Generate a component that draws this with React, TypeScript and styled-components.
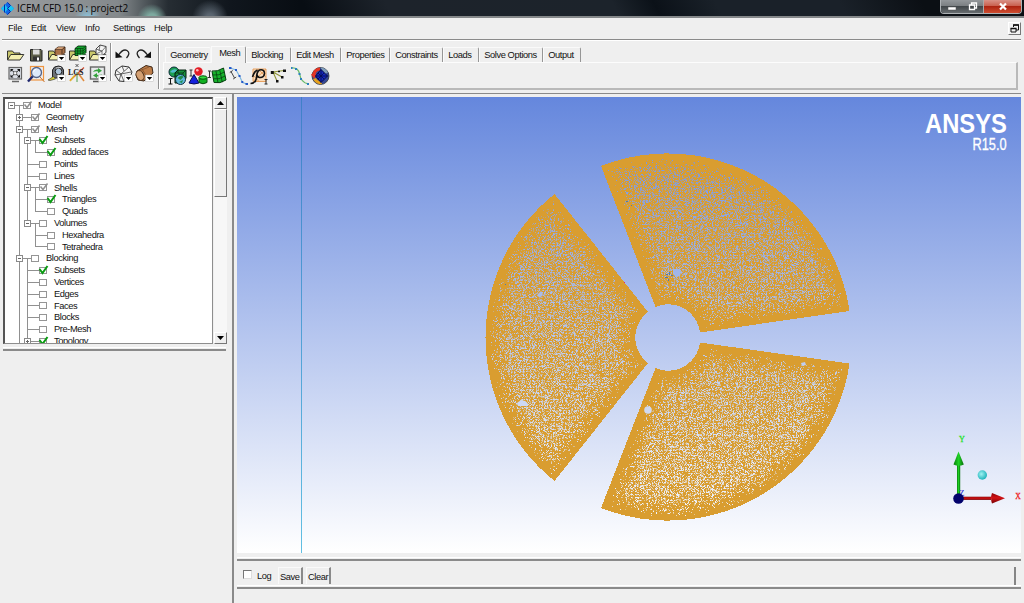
import React from 'react';
import styled, { createGlobalStyle } from 'styled-components';

const Global = createGlobalStyle`
  html, body { margin: 0; padding: 0; background: #efefef; overflow: hidden; }
  * { box-sizing: border-box; }
  svg { display: block; }
`;

const Window = styled.div`
  width: 1024px;
  height: 603px;
  display: flex;
  flex-direction: column;
  background: #efefef;
  font-family: 'Liberation Sans', Arial, sans-serif;
  font-size: 9.3px;
  letter-spacing: -0.4px;
  color: #111;
  white-space: nowrap;
`;

/* ---------- title bar ---------- */

const TitleBar = styled.header`
  height: 18px;
  flex: none;
  display: flex;
  align-items: flex-start;
  padding-left: 1px;
  border-bottom: 2px solid #85888a;
  background:
    radial-gradient(circle at 152px 19px, #7da99f 0 5px, transparent 15px),
    radial-gradient(circle at 88px 20px, #8cc3dc 0 3px, transparent 14px),
    radial-gradient(circle at 210px 18px, #59646f 0 4px, transparent 18px),
    linear-gradient(90deg, #9a9da0 0, #8d9194 70px, #84898c 118px, #5a6165 140px, #262d33 168px, #10161d 230px, transparent 300px),
    linear-gradient(62deg, #080d13 0 30%, #1d232b 38%, #1c232b 60%, #0b1118 64%, #1a2129 70% 82%, #0b0f14 90%);
`;

const TitleText = styled.span`
  flex: 1;
  padding-left: 3px;
  font: 10px/16px 'Open Sans', 'Noto Sans', sans-serif;
  letter-spacing: -0.1px;
  color: #060606;
`;

const Caption = styled.div`
  display: flex;
  height: 14px;
  margin-right: 2px;
  border: 1px solid #aeb2b5;
  border-top: 0;
  border-radius: 0 0 4px 4px;
  overflow: hidden;
`;

const CaptionButton = styled.div<{ $w: number; $close?: boolean }>`
  width: ${(p) => p.$w}px;
  display: flex;
  justify-content: center;
  background: ${(p) =>
    p.$close
      ? 'linear-gradient(#d99186, #c9604f 45%, #ad2411 50%, #cf4d30)'
      : 'linear-gradient(#93979a, #7b7f82 45%, #42474a 50%, #686d70)'};
  border-left: ${(p) => (p.$w === 21 ? '0' : '1px solid #a9a9aa')};
`;

/* ---------- menu bar ---------- */

const MenuBar = styled.nav`
  height: 22px;
  flex: none;
  display: flex;
  align-items: center;
  border-bottom: 1px solid #8a8a8a;
  margin: 0 3px 0 2px;
  padding: 0 0 1px 6px;
`;

const MenuItem = styled.span<{ $w: number }>`
  width: ${(p) => p.$w}px;
  letter-spacing: -0.2px;
`;

const RestoreBox = styled.div`
  margin-left: auto;
  width: 13px;
  height: 13px;
  background: #f2f2f2;
  border: 1px solid;
  border-color: #fff #777 #777 #fff;
`;

/* ---------- tool bar ---------- */

const ToolBar = styled.section`
  height: 54px;
  flex: none;
  display: flex;
  margin: 0 3px 0 2px;
  border-bottom: 1px solid #8a8a8a;
  border-top: 1px solid #fff;
`;

const IconGrid = styled.div<{ $cols: number; $gap: number; $top?: number }>`
  display: grid;
  grid-template-columns: repeat(${(p) => p.$cols}, 20.6px);
  grid-auto-rows: 20px;
  padding: ${(p) => p.$top ?? 3}px 0 0 ${(p) => p.$gap}px;
`;

const Divider = styled.div<{ $h: number; $l: number }>`
  width: 2px;
  height: ${(p) => p.$h}px;
  margin: 2px 0 0 ${(p) => p.$l}px;
  border-left: 1px solid #909090;
  border-right: 1px solid #fff;
`;

const TabArea = styled.div`
  flex: 1;
  margin: 5px 3px 0 3px;
`;

const TabStrip = styled.div`
  display: flex;
  height: 16px;
  align-items: flex-end;
  padding-left: 2px;
`;

const Tab = styled.div<{ $w: number; $active?: boolean }>`
  width: ${(p) => p.$w}px;
  height: ${(p) => (p.$active ? 17 : 15)}px;
  margin-bottom: ${(p) => (p.$active ? '-1px' : '0')};
  padding: ${(p) => (p.$active ? '0 0 4px 7px' : '0 0 1px 4px')};
  display: flex;
  align-items: center;
  background: #efefef;
  border-top: 1px solid #fafafa;
  border-left: 1px solid #fafafa;
  border-right: 1px solid ${(p) => (p.$w === 46 ? '#f6f6f6' : '#969696')};
  border-top-right-radius: 2px;
`;

const TabPanel = styled.div`
  height: 28px;
  display: flex;
  align-items: center;
  padding-left: 3px;
  border: 1px solid;
  border-color: #fcfcfc #b9b9b9 #b9b9b9 #fcfcfc;
  border-right-width: 2px;
  border-bottom-width: 2px;
`;

/* ---------- body ---------- */

const Body = styled.main`
  flex: 1;
  display: flex;
  min-height: 0;
`;

const Side = styled.aside`
  width: 234px;
  flex: none;
  border-right: 2px solid #8a8a8a;
  padding: 3px 0 0 3px;
`;

const TreeRow = styled.div`
  display: flex;
  height: 250px;
`;

const TreeBox = styled.div`
  width: 210px;
  height: 247px;
  padding-top: 1px;
  overflow: hidden;
  background: #fff;
  border: 1px solid #8e8e8e;
  border-left: 2px solid #555;
  border-top: 2px solid #4c4c4c;
`;

const Node = styled.div`
  display: flex;
  align-items: center;
  height: 11.8px;
  line-height: 11.8px;
`;

const ScrollBar = styled.div`
  width: 13px;
  height: 247px;
  display: flex;
  flex-direction: column;
  margin-left: 1px;
  background: #f7f7f7;
`;

const ScrollPart = styled.div<{ $h: number }>`
  height: ${(p) => p.$h}px;
  display: flex;
  align-items: center;
  justify-content: center;
  background: #efefef;
  border: 1px solid;
  border-color: #fff #777 #777 #fff;
`;

const Spacer = styled.div`
  flex: 1;
`;

const Rule = styled.div<{ $w: string }>`
  width: ${(p) => p.$w};
  height: 4px;
  border-bottom: 2px solid #8a8a8a;
  border-top: 1px solid #fff;
`;

const Work = styled.section`
  flex: 1;
  padding: 3px 3px 0 3px;
  display: flex;
  flex-direction: column;
`;

const Viewport = styled.div`
  height: 456px;
  flex: none;
  margin-bottom: 4px;
`;

const LogBar = styled.div`
  height: 24px;
  display: flex;
  align-items: center;
  padding: 5px 5px 0 6px;
`;

const CheckBox = styled.div`
  width: 9px;
  height: 9px;
  margin-bottom: 2px;
  background: #fff;
  border: 1px solid;
  border-color: #777 #ddd #ddd #777;
`;

const LogLabel = styled.span`
  margin: 1px 0 0 5px;
  width: 21px;
`;

const LogButton = styled.div<{ $w: number }>`
  width: ${(p) => p.$w}px;
  height: 17px;
  line-height: 19px;
  padding-left: 1px;
  margin-right: 3px;
  border-left: 1px solid #fafafa;
  border-top: 1px solid #fafafa;
  border-right: 2px solid #8a8a8a;
`;

const LogEnd = styled.div`
  margin-left: auto;
  width: 2px;
  height: 18px;
  background: #858585;
`;

/* ---------- tool icons ---------- */

const Svg = ({ children }: { children: React.ReactNode }) => (
  <svg width="20" height="20" viewBox="0 0 20 20">
    {children}
  </svg>
);

const Drop = () => (
  <g>
    <rect x="11.500" y="11" width="8" height="6.500" fill="#fff" stroke="#bbb" strokeWidth=".5" />
    <path d="M12.800 13h5.400l-2.700 3z" fill="#000" />
  </g>
);

const Folder = () => (
  <g stroke="#222" strokeWidth=".9">
    <path d="M2.500 15.500V7h5l1.500 2h6v6.500z" fill="#c9c76b" />
    <path d="M2.500 16l3.300-5.500h13l-3.800 5.500z" fill="#f3efb0" />
  </g>
);

const OpenIcon = () => (
  <Svg>
    <Folder />
  </Svg>
);

const SaveIcon = () => (
  <Svg>
    <path d="M4.500 5.500h10.500l1 1V17h-11.500z" fill="#5f604a" stroke="#222" />
    <rect x="7" y="5.500" width="6.500" height="5" fill="#dcdcdc" />
    <rect x="7" y="12.500" width="7" height="4.500" fill="#333" />
    <rect x="11" y="13.500" width="2" height="3" fill="#fff" />
  </Svg>
);

const OpenGeometryIcon = () => (
  <Svg>
    <Folder />
    <path d="M9 5.500l3-2.500h7v5.500l-3 3H9z" fill="#a87148" stroke="#3c2616" strokeWidth=".9" />
    <path d="M9 5.500h7v6M16 5.500l3-2.500" fill="none" stroke="#3c2616" strokeWidth=".8" />
    <path d="M9.500 5.300l2.700-2H18l-2.300 2z" fill="#d2a078" />
    <Drop />
  </Svg>
);

const OpenMeshIcon = () => (
  <Svg>
    <Folder />
    <path d="M8 4.500l3-2.500h8v6.500l-3 3H8z" fill="#12a52c" stroke="#08310e" strokeWidth=".9" />
    <path d="M8 4.500h8v7M16 4.500l3-2.500M10.700 4.500v7M13.400 4.500v7M8 7h8l3-3M8 9.300h8l3-3" fill="none" stroke="#062a0b" strokeWidth=".6" />
    <Drop />
  </Svg>
);

const OpenBlockIcon = () => (
  <Svg>
    <Folder />
    <path d="M9 5l4-4 6 1.500v6l-4 3-6-1z" fill="#f4f4f4" stroke="#333" strokeWidth=".9" />
    <path d="M9 5l6 2 4-4.500M15 7v4.500M13 1l-1 6 M9 10l6-3" fill="none" stroke="#444" strokeWidth=".7" />
    <Drop />
  </Svg>
);

const FitIcon = () => (
  <Svg>
    <rect x="4" y="3.500" width="12.500" height="11.500" fill="#d9dde4" stroke="#666" strokeWidth="1.200" />
    <path d="M6 5.500l8.500 7.500M14.500 5.500l-8.500 7.500" stroke="#222" strokeWidth=".9" />
    <path d="M5.500 5h3l-3 3zM15 5v3l-3-3zM5.500 13.500v-3l3 3zM15 13.500h-3l3-3z" fill="#111" />
    <rect x="8.800" y="7.800" width="3" height="3" fill="#fff" stroke="#333" strokeWidth=".6" />
    <path d="M7 17.500h7" stroke="#666" strokeWidth="1.500" />
  </Svg>
);

const ZoomIcon = () => (
  <Svg>
    <rect x="4.500" y="2.500" width="13" height="13.500" fill="none" stroke="#ef9541" strokeWidth="1.200" />
    <path d="M7 12l-5 5.500" stroke="#20286e" strokeWidth="2.400" />
    <circle cx="10.500" cy="8.500" r="5" fill="#dde9fa" stroke="#56658a" strokeWidth="1.300" />
    <path d="M7.500 8q.5-2.500 3-3" stroke="#fff" fill="none" />
    <path d="M14 13l4.500 5" stroke="#cb752b" />
  </Svg>
);

const MeasureIcon = () => (
  <Svg>
    <path d="M6.500 13V6q1-4 6-4 4 0 5 4v8h-8z" fill="#6a6f76" stroke="#222" />
    <circle cx="12.500" cy="7.500" r="3.300" fill="#adc4da" stroke="#222" />
    <path d="M10 4l5-.5" stroke="#ddd" />
    <path d="M2 16l5.500-3.500 2 2.500-5.500 1.500z" fill="#d7d22f" stroke="#444" strokeWidth=".7" />
    <Drop />
  </Svg>
);

const LcsIcon = () => (
  <Svg>
    <path d="M3 16.500L17 3.500" stroke="#d04a2d" strokeWidth="1.200" />
    <path d="M8 11l-5 6" stroke="#e3b52b" strokeWidth="1.500" />
    <path d="M10 8v10" stroke="#4fa04f" />
    <path d="M11 9l6 8" stroke="#e08a3c" strokeWidth="1.500" />
    <path d="M8.500 0l3 3M11.500 0l-3 3" stroke="#333" strokeWidth=".8" />
    <text x="1" y="10.500" fontFamily="Liberation Serif, serif" fontSize="8" fontWeight="700" letterSpacing="0" fill="#222">
      LCS
    </text>
  </Svg>
);

const RefreshIcon = () => (
  <Svg>
    <rect x="3.500" y="3" width="14" height="12" fill="#e6e9ea" stroke="#666" strokeWidth="1.400" />
    <path d="M6 8q1-3 5-2.500V4l4 2.800-4 2.400V7.500Q8.500 7 6 8zM15 10q-1 3-5 2.500V14l-4-2.500L10 9v1.700Q13 11.500 15 10z" fill="#35a23c" />
    <path d="M6 17.500h6" stroke="#555" strokeWidth="1.500" />
    <Drop />
  </Svg>
);

const UndoIcon = () => (
  <Svg>
    <path d="M5.500 11Q10 4.500 14 6.500q4 2.500-.5 7.500" fill="none" stroke="#222" strokeWidth="1.300" />
    <path d="M2.500 7.500v6.500l7-.7z" fill="#111" />
  </Svg>
);

const RedoIcon = () => (
  <Svg>
    <path d="M13.500 11Q9 4.500 5 6.500q-4 2.500.5 7.500" fill="none" stroke="#222" strokeWidth="1.300" />
    <path d="M17 7.500v6.500l-7-.7z" fill="#111" />
  </Svg>
);

const WireIcon = () => (
  <Svg>
    <path d="M2 11l1-5 6-4 7 1 3 5-2 6-6 3.500-5-.5z" fill="#f4f4f4" stroke="#333" />
    <path d="M3 6l5 4 8-7M8 10l3 7.500M2 11l6-1 10-2M9 2l2 5M8 10l-2 7" fill="none" stroke="#444" strokeWidth=".8" />
    <Drop />
  </Svg>
);

const SolidIcon = () => (
  <Svg>
    <path d="M2 11l1-4 9-5.500 6 1.500 1 6-9 8-6-1z" fill="#bd7d49" stroke="#3c2616" />
    <ellipse cx="6" cy="11.500" rx="3.700" ry="5.200" transform="rotate(-25 6 11.500)" fill="#d5a173" stroke="#4b301c" strokeWidth=".9" />
    <path d="M8 5l5 8M5 7l10-4" stroke="#7d4d2a" strokeWidth=".7" />
    <Drop />
  </Svg>
);

const GlobalMeshIcon = () => (
  <Svg>
    <circle cx="7" cy="6" r="5" fill="#1ca053" stroke="#0c2c38" />
    <path d="M3 6q3-4 7-2-2 4-7 2z" fill="#52b9cd" />
    <path d="M8 7l3-3h8v8l-3 5H8z" fill="#17913c" stroke="#051f0e" />
    <path d="M8 7h8v10M16 7l3-3M11 7V4M8 10h8M12 7v6" fill="none" stroke="#051f0e" strokeWidth=".7" />
    <circle cx="13.500" cy="13.500" r="5" fill="#5fbadb" stroke="#102e41" />
    <path d="M10.500 12q4-4 6-1l-3 3zM12 16l4-2-1 3z" fill="#238b48" />
    <path d="M1.500 12.500h4M3.500 12.500v5.500M1.500 18h4" stroke="#111" fill="none" />
  </Svg>
);

const PartMeshIcon = () => (
  <Svg>
    <path d="M1.500 4h3M3 4v6M1.500 10h3" stroke="#333" fill="none" />
    <path d="M6 8.500l5 8.500q-5 2-10 0z" fill="#1420dd" stroke="#060a54" />
    <circle cx="10.500" cy="5.500" r="4.200" fill="#e21b25" />
    <circle cx="9.300" cy="4.200" r="1.300" fill="#ffb5b5" />
    <path d="M11 11.500v5q4 2.500 8 0v-5z" fill="#0fb021" stroke="#064a0d" />
    <ellipse cx="15" cy="11.500" rx="4" ry="1.700" fill="#2fe03c" stroke="#064a0d" />
  </Svg>
);

const SurfaceMeshIcon = () => (
  <Svg>
    <path d="M4 5Q9 6 15.500 2L18 14Q12 18 6 16.500z" fill="#17b22b" stroke="#073f10" />
    <path d="M8 5.300l2 11.600M11.800 4.300l2.500 12M4.700 9Q11 10 16.300 6M5.300 12.800Q11 14 17.200 10" fill="none" stroke="#073f10" strokeWidth=".8" />
    <path d="M0 5h3M1.500 5v6.500M0 11.500h3" stroke="#333" fill="none" />
  </Svg>
);

const CurveMeshIcon = () => (
  <Svg>
    <path d="M1 2l6 2L10.500 10l3 6.500L18 18" fill="none" stroke="#7ab4dd" strokeWidth="1.100" />
    <path d="M2 5.500L5.500 12M.8 6.500l3-2M4.200 13l3-2" stroke="#444" fill="none" />
    <path d="M0 1h2.500v2H0zM6 3h2v2H6zM9.500 9h2v2h-2zM12.300 15h2v2h-2zM16.500 17H19v2h-2.500z" fill="#2459ca" />
  </Svg>
);

const DensityIcon = () => (
  <Svg>
    <path d="M3 3h13v12.500H3zM3 15.500L16 3M3 9l6 6.500M8 3l8 8" fill="#f9dcbd" stroke="#e8a160" />
    <path d="M0.500 17.500q5 0 6-5.500 0-6 3-8 5-1 5 3.500-.5 4.500-5 4-3-.5-2.500-4M2.500 11q2-6 5-7" fill="none" stroke="#111" strokeWidth="1.600" />
    <path d="M14.500 13.500h3M16 13.500V18M14.500 18h3" stroke="#222" fill="none" />
  </Svg>
);

const NodesIcon = () => (
  <Svg>
    <path d="M3 6L14 4.500M3 6l9 5M3 6l4 9" stroke="#8f9436" strokeWidth="1.100" fill="none" />
    <path d="M.8 5h3v3h-3zM13 3.500h3v2.500h-3zM8 4.700h2v1.600H8zM11 10h2.500v2.500H11zM6 14h2.500v2.500H6z" fill="#111" />
  </Svg>
);

const SplineIcon = () => (
  <Svg>
    <path d="M0 2q7-1 8.500 5.500Q10 17 17.500 18" fill="none" stroke="#69bb6c" strokeWidth="1.300" />
    <path d="M-.5 1h2v2h-2zM4 2h2v2H4zM7.500 7h2v2h-2zM9 12h2v2H9zM16 17h2v2h-2z" fill="#2b7fc0" />
  </Svg>
);

const ComputeIcon = () => (
  <Svg>
    <circle cx="9.500" cy="10" r="8.500" fill="#344896" stroke="#333" strokeWidth=".8" />
    <path d="M1.500 7.500Q3 2 9 1.500v3Q5 5 4.500 8.500h2l-3.500 4-3-4z" fill="#e53524" />
    <path d="M2 13q3 6 9 5l-1-3q-4 0-5-3z" fill="#e8a31c" />
    <path d="M10 1.500q5 .5 7 5l-3 1.500q-1-3-4-3z" fill="#7f9db8" />
    <path d="M10 3.500l6.500 6.500-6.500 6.500L4.500 10z" fill="#1527bd" stroke="#060b4d" />
    <path d="M10 3.500v13M4.500 10h12M7 7l6 6M13 7l-6 6" stroke="#060b4d" strokeWidth=".8" />
  </Svg>
);

const fileIcons = [OpenIcon, SaveIcon, OpenGeometryIcon, OpenMeshIcon, OpenBlockIcon, FitIcon, ZoomIcon, MeasureIcon, LcsIcon, RefreshIcon];
const editIcons = [UndoIcon, RedoIcon, WireIcon, SolidIcon];
const meshIcons = [GlobalMeshIcon, PartMeshIcon, SurfaceMeshIcon, CurveMeshIcon, DensityIcon, NodesIcon, SplineIcon, ComputeIcon];

/* ---------- model tree ---------- */

type Mark = 'off' | 'on' | 'partial';
interface Item {
  text: string;
  level: number;
  mark: Mark;
  box?: '+' | '-';
}

const items: Item[] = [
  { text: 'Model', level: 0, mark: 'partial', box: '-' },
  { text: 'Geometry', level: 1, mark: 'partial', box: '+' },
  { text: 'Mesh', level: 1, mark: 'partial', box: '-' },
  { text: 'Subsets', level: 2, mark: 'on', box: '-' },
  { text: 'added faces', level: 3, mark: 'on' },
  { text: 'Points', level: 2, mark: 'off' },
  { text: 'Lines', level: 2, mark: 'off' },
  { text: 'Shells', level: 2, mark: 'partial', box: '-' },
  { text: 'Triangles', level: 3, mark: 'on' },
  { text: 'Quads', level: 3, mark: 'off' },
  { text: 'Volumes', level: 2, mark: 'off', box: '-' },
  { text: 'Hexahedra', level: 3, mark: 'off' },
  { text: 'Tetrahedra', level: 3, mark: 'off' },
  { text: 'Blocking', level: 1, mark: 'off', box: '-' },
  { text: 'Subsets', level: 2, mark: 'on' },
  { text: 'Vertices', level: 2, mark: 'off' },
  { text: 'Edges', level: 2, mark: 'off' },
  { text: 'Faces', level: 2, mark: 'off' },
  { text: 'Blocks', level: 2, mark: 'off' },
  { text: 'Pre-Mesh', level: 2, mark: 'off' },
  { text: 'Topology', level: 2, mark: 'on', box: '+' },
];

const continues = (index: number, depth: number) => {
  for (let j = index + 1; j < items.length; j++) {
    if (items[j].level < depth) return false;
    if (items[j].level === depth) return true;
  }
  return depth === 1;
};

const Gutter = ({ index }: { index: number }) => {
  const { level, mark, box } = items[index];
  const x = 6.5 + 8 * level;
  const c = x + 15;
  let d = `M${x} 5.5H${c}`;
  for (let k = 1; k <= level; k++) {
    const gx = 6.5 + 8 * k;
    if (k === level) d += `M${gx} 0V6`;
    if (continues(index, k)) d += `M${gx} 0V12`;
  }
  if (box === '-') d += `M${x + 8} 6V12`;
  return (
    <svg width={33 + 8 * level} height="12" style={{ flex: 'none' }}>
      <path d={d} stroke="#909090" fill="none" />
      {box && (
        <g stroke="#8a8a8a" fill="#fff">
          <rect x={x - 3} y="2.500" width="6" height="6" />
          <path d={`M${x - 1.5} 5.500h3${box === '+' ? `M${x} 4v3` : ''}`} stroke="#666" />
        </g>
      )}
      <rect x={c - 3} y="2.500" width="7" height="6" fill="#fff" stroke="#959595" />
      {mark === 'on' && <path d={`M${c - 3} 4l3 4 5-7`} stroke="#0a9c12" strokeWidth="2" fill="none" />}
      {mark === 'partial' && <path d={`M${c - 2} 4.500l2.500 3 4.500-6`} stroke="#8f8f8f" strokeWidth="1.500" fill="none" />}
    </svg>
  );
};

/* ---------- mesh drawing ---------- */

const CX = 430.7;
const CY = 240.2;
const R_OUT = 183.7;
const R_IN = 32;

type Pt = [number, number];
interface Sector {
  a: Pt;
  b: Pt;
  c: Pt;
  d: Pt;
}

// a, d lie on the rim; b, c lie on the hub
const sectors: Sector[] = [
  { a: [364, 69], b: [418.5, 210], c: [463, 235.5], d: [612.5, 214] },
  { a: [317.5, 384], b: [411, 266], c: [411, 215], d: [317.5, 97] },
  { a: [612.5, 266.5], b: [463, 245.5], c: [418.5, 271], d: [364, 411] },
];

const outline = ({ a, b, c, d }: Sector) =>
  `M${a}L${b}A${R_IN} ${R_IN} 0 0 1 ${c}L${d}A${R_OUT} ${R_OUT} 0 0 0 ${a}Z`;

const side = (p: Pt, q: Pt, x: number, y: number) =>
  ((q[0] - p[0]) * (y - p[1]) - (q[1] - p[1]) * (x - p[0])) / Math.hypot(q[0] - p[0], q[1] - p[1]);

const gaps = (() => {
  let seed = 90217;
  const rnd = () => {
    seed = (seed * 1664525 + 1013904223) >>> 0;
    return seed / 4294967296;
  };
  const layers = ['', '', ''];
  for (let y = 56; y < 425; y++) {
    for (let x = 247; x < 613; x++) {
      const r = Math.hypot(x - CX, y - CY);
      if (r > R_OUT - 4 || r < R_IN + 4) continue;
      for (const s of sectors) {
        const e1 = -side(s.a, s.b, x, y);
        const e2 = -side(s.c, s.d, x, y);
        if (e1 < 3 || e2 < 3) continue;
        const edge = Math.min(e1, e2, R_OUT - r, r - R_IN);
        const grow = Math.min(1, Math.max(0, (edge - 4) / 20));
        const stripe = (x % 3 === 0 ? 0.7 : 1.1) * (y % 3 === 0 ? 0.75 : 1.1);
        if (rnd() < 0.5 * grow * stripe) {
          layers[Math.floor(rnd() * 3)] += `M${x} ${y}h1v1h-1z`;
        }
      }
    }
  }
  return layers;
})();

const Scene = () => (
  <svg width="784" height="456" viewBox="0 0 784 456">
    <defs>
      <linearGradient id="sky" gradientUnits="userSpaceOnUse" x1="0" y1="0" x2="0" y2="456">
        <stop offset="0" stopColor="#6587dd" />
        <stop offset="1" stopColor="#ffffff" />
      </linearGradient>
      <linearGradient id="axisLine" gradientUnits="userSpaceOnUse" x1="0" y1="0" x2="0" y2="456">
        <stop offset="0" stopColor="#3f7fc8" />
        <stop offset="1" stopColor="#62bfe2" />
      </linearGradient>
      <radialGradient id="ball" cx=".4" cy=".4" r=".6">
        <stop offset="0" stopColor="#9ff2f2" />
        <stop offset="1" stopColor="#22b4bc" />
      </radialGradient>
      <linearGradient id="green">
        <stop offset="0" stopColor="#067d0a" />
        <stop offset=".5" stopColor="#1fd426" />
        <stop offset="1" stopColor="#056b08" />
      </linearGradient>
      <linearGradient id="red" x1="0" y1="0" x2="0" y2="1">
        <stop offset="0" stopColor="#8c0507" />
        <stop offset=".45" stopColor="#d21114" />
        <stop offset="1" stopColor="#760305" />
      </linearGradient>
    </defs>
    <rect width="784" height="456" fill="url(#sky)" />
    <rect x="64" width="1" height="456" fill="url(#axisLine)" />
    {sectors.map((s, i) => (
      <path key={i} d={outline(s)} fill="#d99d30" shapeRendering="crispEdges" />
    ))}
    {gaps.map((d, i) => (
      <path key={i} d={d} fill="url(#sky)" opacity={[0.45, 0.7, 1][i]} shapeRendering="crispEdges" />
    ))}
    <g fill="url(#sky)">
      <path d="M436 172h7l1 3-1 4-4 1-3-3z" />
      <path d="M280 306l4-3 4 1 3 3-1 2h-9z" />
      <circle cx="411" cy="313" r="3.800" />
      <path d="M301 197l3-3 2 3-2 3-4-1z" />
      <path d="M564 266l4-1 1 3-4 1z" />
    </g>
    <path d="M429 177h2v1h-2zM432 175h1v3h-1zM428 180h3v1h-3zM434 178h2v1h-2zM431 182h1v2h-1zM389 104h2v1h-2zM394 108h1v1h-1zM268 187h1v1h-1z" fill="#5079ad" />
    <path d="M387 185h1v1h-1z" fill="#e22b6a" />
    <text transform="translate(688 36) scale(.835 1)" fontFamily="Liberation Sans, Arial, sans-serif" fontSize="28.500" fontWeight="700" fill="#fff" letterSpacing="0">
      ANSYS
    </text>
    <text transform="translate(735.500 53) scale(.8 1)" fontFamily="Liberation Sans, Arial, sans-serif" fontSize="16" fill="#fff" stroke="#fff" strokeWidth=".3" letterSpacing="0">
      R15.0
    </text>
    <rect x="720" y="364" width="3.200" height="35" fill="url(#green)" />
    <path d="M721.500 354.500l5.300 13q-5 2.500-10.300 0z" fill="url(#green)" />
    <rect x="724" y="399.700" width="30" height="3.200" fill="url(#red)" />
    <path d="M768 401.300l-13 5.300q-2-5.300 0-10.600z" fill="url(#red)" />
    <text x="722" y="399" fontFamily="Liberation Serif, serif" fontSize="9" fill="#2424d8" letterSpacing="0">
      Z
    </text>
    <circle cx="721.500" cy="401.500" r="5.300" fill="#02026c" />
    <circle cx="745.300" cy="378" r="4.700" fill="url(#ball)" />
    <text transform="translate(722 344.500) scale(.9 1)" fontFamily="Liberation Serif, serif" fontSize="9" fill="#27e02b" stroke="#27e02b" strokeWidth=".3" letterSpacing="0">
      Y
    </text>
    <text transform="translate(778.300 401.500) scale(.85 1)" fontFamily="Liberation Serif, serif" fontSize="9" fill="#ee2222" stroke="#ee2222" strokeWidth=".3" letterSpacing="0">
      X
    </text>
  </svg>
);

const menus: [string, number][] = [['File', 23], ['Edit', 25], ['View', 29], ['Info', 28], ['Settings', 41], ['Help', 30]];

const tabs: [string, number][] = [
  ['Geometry', 46],
  ['Mesh', 35],
  ['Blocking', 45],
  ['Edit Mesh', 50],
  ['Properties', 49],
  ['Constraints', 53],
  ['Loads', 36],
  ['Solve Options', 64],
  ['Output', 38],
];

export default function App() {
  return (
    <Window>
      <Global />
      <TitleBar>
        <svg width="13" height="16" viewBox="0 0 13 16">
          <path d="M6.500 2L13 8.500 6.500 15 0 8.500z" fill="#1267e8" />
          <path d="M4 4.500l3 4-3 4-4-4zM9.500 5L13 8.500 9.500 12 7 8.500z" fill="#18c4f3" />
          <path d="M3.500 4.500v8M6.500 2.500l3 3-3 3 3 3-3 3" stroke="#062aa8" fill="none" />
        </svg>
        <TitleText>ICEM CFD 15.0 : project2</TitleText>
        <Caption>
          <CaptionButton $w={21}>
            <svg width="10" height="13"><rect x="1" y="7" width="8" height="3" fill="#fff" stroke="#555" strokeWidth=".5" /></svg>
          </CaptionButton>
          <CaptionButton $w={21}>
            <svg width="10" height="13"><path d="M3.500 5V3h5v5H7M1.500 5h5v4.500h-5z" fill="none" stroke="#fff" strokeWidth="1.300" /></svg>
          </CaptionButton>
          <CaptionButton $w={38} $close>
            <svg width="10" height="13"><path d="M2 3.500l6 6M8 3.500l-6 6" stroke="#fff" strokeWidth="2.200" /></svg>
          </CaptionButton>
        </Caption>
      </TitleBar>
      <MenuBar>
        {menus.map(([text, w]) => (
          <MenuItem key={text} $w={w}>{text}</MenuItem>
        ))}
        <RestoreBox>
          <svg width="11" height="11"><path d="M4.500 4V2h5v5H7M2 5.500h5V9H2z" fill="none" stroke="#111" /><path d="M4 2h6M1.500 5.500h6" stroke="#111" strokeWidth="1.600" /></svg>
        </RestoreBox>
      </MenuBar>
      <ToolBar>
        <IconGrid $cols={5} $gap={3}>
          {fileIcons.map((Icon, i) => <Icon key={i} />)}
        </IconGrid>
        <Divider $h={38} $l={2} />
        <IconGrid $cols={2} $gap={1}>
          {editIcons.map((Icon, i) => <Icon key={i} />)}
        </IconGrid>
        <Divider $h={46} $l={4} />
        <TabArea>
          <TabStrip>
            {tabs.map(([text, w]) => (
              <Tab key={text} $w={w} $active={text === 'Mesh'}>{text}</Tab>
            ))}
          </TabStrip>
          <TabPanel>
            <IconGrid $cols={8} $gap={0} $top={0}>
              {meshIcons.map((Icon, i) => <Icon key={i} />)}
            </IconGrid>
          </TabPanel>
        </TabArea>
      </ToolBar>
      <Body>
        <Side>
          <TreeRow>
            <TreeBox>
              {items.map((item, i) => (
                <Node key={i}>
                  <Gutter index={i} />
                  <span>{item.text}</span>
                </Node>
              ))}
            </TreeBox>
            <ScrollBar>
              <ScrollPart $h={12}><svg width="7" height="4"><path d="M0 4l3.500-4L7 4z" /></svg></ScrollPart>
              <ScrollPart $h={88} />
              <Spacer />
              <ScrollPart $h={12}><svg width="7" height="4"><path d="M0 0h7L3.500 4z" /></svg></ScrollPart>
            </ScrollBar>
          </TreeRow>
          <Rule $w="223px" />
        </Side>
        <Work>
          <Viewport>
            <Scene />
          </Viewport>
          <Rule $w="100%" />
          <LogBar>
            <CheckBox />
            <LogLabel>Log</LogLabel>
            <LogButton $w={25}>Save</LogButton>
            <LogButton $w={25}>Clear</LogButton>
            <LogEnd />
          </LogBar>
          <Rule $w="100%" />
        </Work>
      </Body>
    </Window>
  );
}
